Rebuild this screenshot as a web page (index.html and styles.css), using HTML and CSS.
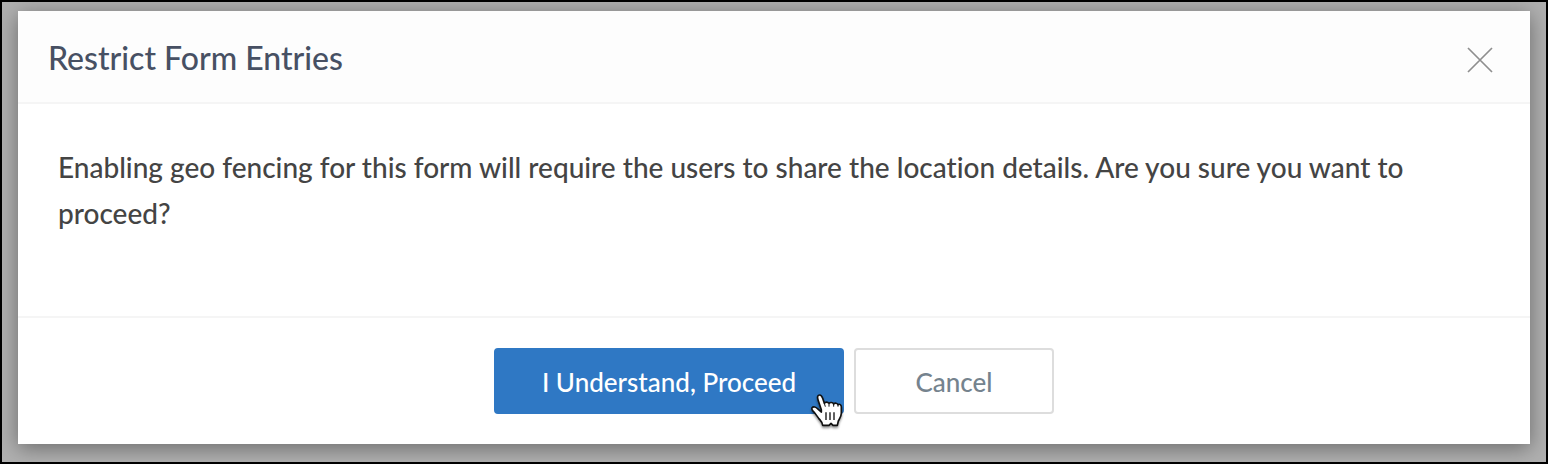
FILE: index.html
```html
<!DOCTYPE html>
<html lang="en">
<head>
    <meta charset="UTF-8">
    <meta name="viewport" content="width=device-width, initial-scale=1">
    <title>Restrict Form Entries</title>
    <link rel="stylesheet" href="styles.css">
</head>
<body>
    <div class="overlay">
        <div class="modal" role="dialog" aria-modal="true" aria-labelledby="modal-title">
            <div class="modal-header">
                <h1 class="modal-title" id="modal-title">Restrict Form Entries</h1>
                <button type="button" class="close" aria-label="Close">
                    <svg width="26" height="26" viewBox="0 0 26 26" aria-hidden="true">
                        <path d="M1 1L25 25M25 1L1 25" fill="none" stroke="#8f8f8f" stroke-width="1.7"/>
                    </svg>
                </button>
            </div>

            <div class="modal-body">
                <p>Enabling geo fencing for this form will require the users to share the location details. Are you sure you want to proceed?</p>
            </div>

            <div class="modal-footer">
                <button type="button" class="btn btn-primary">
                    I Understand, Proceed
                    <!-- hand pointer -->
                    <svg class="pointer" width="34" height="38" viewBox="60 69 102 114" aria-hidden="true">
                        <path d="M94 119L84 89C81 80 83 75 89 75C94 75 96 79 98 85L103 100C106 95 113 95 117 100C121 96 128 97 131 102C135 98 142 99 144 104C149 101 154 104 154 111V130C154 140 149 146 145 153L142 166H129L123 160L117 166H98C98 157 92 152 86 145C80 137 76 130 68 122C62 115 67 110 74 111C81 112 85 120 94 126Z" fill="#fff" stroke="#111" stroke-width="5" stroke-linejoin="round"/>
                        <path d="M108 127V150M120 127V150M132 127V150" fill="none" stroke="#111" stroke-width="4"/>
                        <path d="M103 100L106 110M117 101V110M131 102V110M144 104V110" fill="none" stroke="#111" stroke-width="3"/>
                    </svg>
                </button>
                <button type="button" class="btn btn-cancel">Cancel</button>
            </div>
        </div>
    </div>
</body>
</html>
```
FILE: styles.css
```css
* {
    box-sizing: border-box;
}

body {
    margin: 0;
    font-family: Lato, "Liberation Sans", sans-serif;
    font-weight: 500;
    font-variant-ligatures: none;
}

/* Dimmed page behind the dialog */
.overlay {
    display: flex;
    min-height: 100vh;
    padding: 9px 16px 18px;
    border: 2px solid #000;
    background: #b0b0b0;
}

.modal {
    display: flex;
    flex-direction: column;
    flex: 1;
    background: #fff;
    box-shadow: 0 4px 20px rgba(0, 0, 0, 0.4);
}

/* Header */
.modal-header {
    display: flex;
    align-items: center;
    justify-content: space-between;
    padding: 24px 31px 22px 30px;
    border-bottom: 2px solid #f5f5f5;
    background: #fdfdfd;
}

.modal-title {
    margin: 0;
    font-size: 32px;
    font-weight: 500;
    line-height: 45px;
    color: #475063;
}

.close {
    display: flex;
    padding: 10px 6px 6px;
    border: 0;
    background: none;
    cursor: pointer;
}

/* Body */
.modal-body {
    flex: 1;
    padding: 40px 40px 30px;
    font-size: 28px;
    line-height: 46px;
    color: #444;
}

.modal-body p {
    margin: 0;
}

/* Footer */
.modal-footer {
    display: flex;
    justify-content: center;
    gap: 10px;
    padding: 30px;
    border-top: 2px solid #f5f5f5;
}

.btn {
    position: relative;
    min-width: 200px;
    height: 66px;
    padding: 2px 44px 0;
    border: 2px solid #ddd;
    border-radius: 4px;
    font-family: inherit;
    font-size: 26px;
    font-weight: 500;
    cursor: pointer;
}

.btn-primary {
    min-width: 350px;
    border-color: #2f78c4;
    background: #2f78c4;
    color: #fff;
}

.btn-cancel {
    background: #fff;
    color: #75838e;
}

.pointer {
    position: absolute;
    top: 43px;
    right: -2px;
    filter: drop-shadow(0 2px 1px rgba(0, 0, 0, 0.4));
}
```
